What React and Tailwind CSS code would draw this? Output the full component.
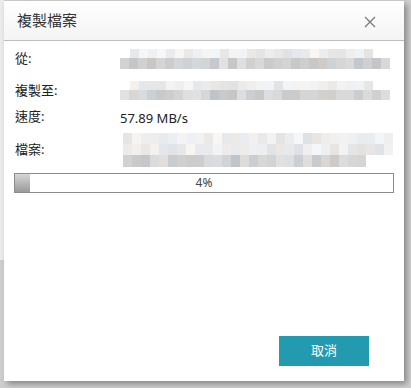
import { useMemo } from "react";

const FONT = '"Segoe UI", "Noto Sans", "Noto Sans CJK TC", sans-serif';

// simple seeded random so the pixelated blur stays the same every run
function makeRand(seed) {
  let s = seed;
  return () => {
    s = (s * 9301 + 49297) % 233280;
    return s / 233280;
  };
}

function BlurRow({ seed, count, light, offset = 0, h = 10 }) {
  const cells = useMemo(() => {
    const r = makeRand(seed);
    return Array.from({ length: count }, () => {
      const base = light ? 226 + Math.floor(r() * 22) : 196 + Math.floor(r() * 30);
      const tint = Math.floor(r() * 8) - 4;
      return `rgb(${base + tint}, ${base}, ${base - tint})`;
    });
  }, [seed, count, light]);
  return (
    <div className="flex" style={{ marginLeft: offset, height: h }}>
      {cells.map((c, i) => (
        <div key={i} className="w-[9px] h-full" style={{ background: c }} />
      ))}
    </div>
  );
}

function Row({ label, children, className = "" }) {
  return (
    <div className={"flex items-center " + className}>
      <div className="w-[105px] shrink-0 text-[13px] text-[#222]">{label}</div>
      <div className="flex-1">{children}</div>
    </div>
  );
}

export default function App() {
  return (
    <div
      className="w-[411px] h-[388px] bg-[#cfcfcf] pt-px pl-[4px] overflow-hidden relative"
      style={{ fontFamily: FONT }}
    >
      <div className="absolute left-0 top-0 w-[4px] h-[260px] bg-[#ececec]" />
      <div className="relative w-[400px] h-[380px] bg-white flex flex-col shadow-[3px_3px_6px_rgba(0,0,0,0.35)]">
        <div className="h-[40px] shrink-0 flex items-center justify-between pl-[13px] pr-[28px] bg-gradient-to-b from-white to-[#f4f4f4] border-b border-[#bdbdbd]">
          <span className="text-[15px] text-[#333]">複製檔案</span>
          <svg width="12" height="12" viewBox="0 0 12 12" className="mt-[2px]">
            <path d="M1 1L11 11M11 1L1 11" stroke="#777" strokeWidth="1.2" />
          </svg>
        </div>

        <div className="flex flex-col px-[11px] pt-[8px]">
          <Row label="從:">
            <BlurRow seed={3} count={27} light offset={10} h={9} />
            <BlurRow seed={7} count={30} h={11} />
          </Row>
          <Row label="複製至:" className="mt-[12px]">
            <BlurRow seed={11} count={27} light offset={10} h={9} />
            <BlurRow seed={19} count={30} h={10} />
          </Row>
          <Row label="速度:" className="h-[26px] mt-[3px]">
            <span className="text-[13px] text-[#222]">57.89 MB/s</span>
          </Row>
          <Row label="檔案:" className="mt-[3px]">
            <BlurRow seed={23} count={30} light offset={3} h={11} />
            <BlurRow seed={29} count={30} light offset={3} h={11} />
            <BlurRow seed={31} count={27} offset={3} h={12} />
          </Row>

          <div className="mt-[6px] -ml-px w-[380px] h-[20px] border border-[#8c8c8c] relative flex items-center justify-center bg-white">
            <div className="absolute left-0 top-0 bottom-0 w-[15px] bg-gradient-to-b from-[#d6d6d6] to-[#9a9a9a]" />
            <span className="relative text-[12px] text-[#444]">4%</span>
          </div>
        </div>

        <div className="flex-1" />
        <div className="flex justify-end pr-[35px] pb-[15px]">
          <button className="w-[90px] h-[30px] bg-[#229bb0] text-white text-[13px]">取消</button>
        </div>
      </div>
    </div>
  );
}
